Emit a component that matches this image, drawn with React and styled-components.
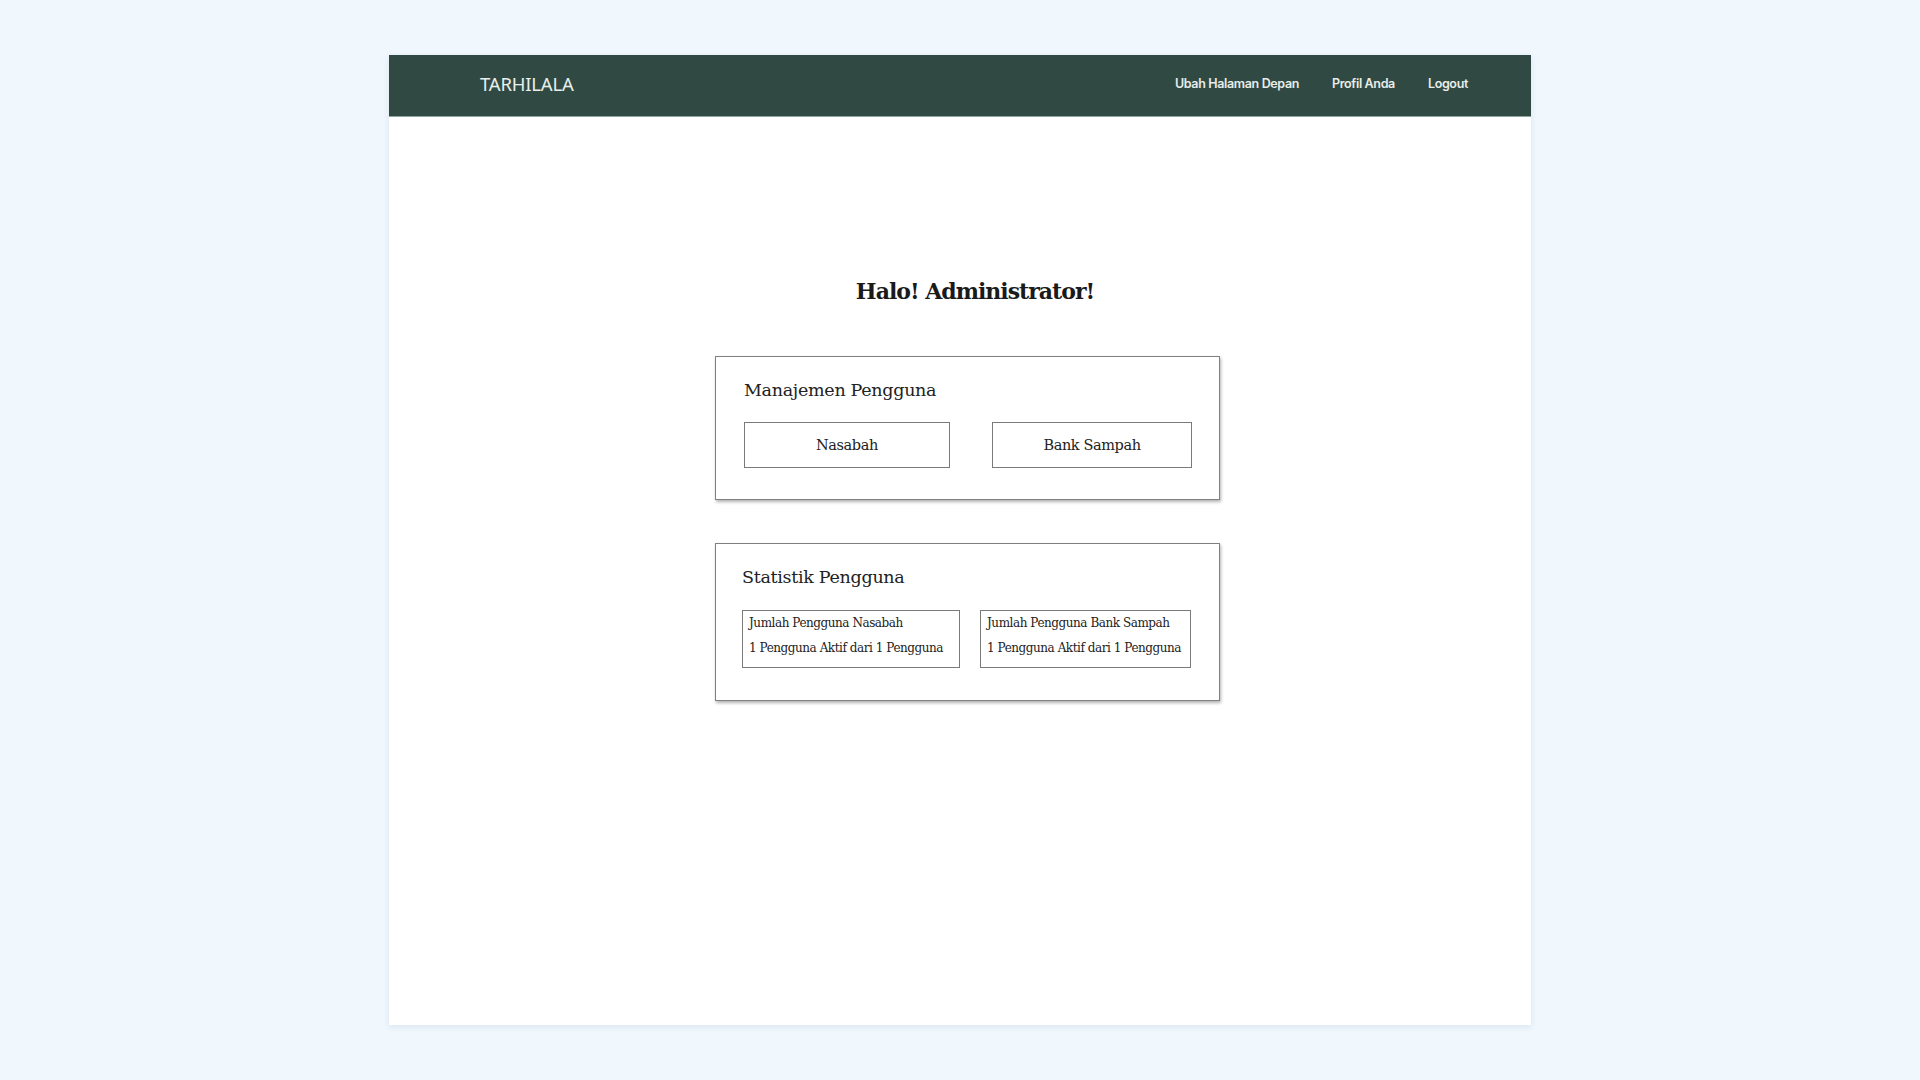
import React from 'react';
import styled, { createGlobalStyle } from 'styled-components';

const Global = createGlobalStyle`
  html, body { margin: 0; padding: 0; }
  body {
    background: #f0f7fd;
    font-family: 'DejaVu Serif', serif;
  }
`;

const Page = styled.div`
  min-height: 1080px;
  display: flex;
  justify-content: center;
  padding-top: 55px;
  box-sizing: border-box;
`;

const Frame = styled.div`
  width: 1142px;
  height: 970px;
  background: #ffffff;
  box-shadow: 0 2px 6px rgba(180, 200, 215, 0.35);
  display: flex;
  flex-direction: column;
`;

const NavBar = styled.header`
  height: 62px;
  background: #304a43;
  border-bottom: 1px solid #8fa59e;
  box-sizing: border-box;
  display: flex;
  align-items: center;
  justify-content: space-between;
  padding: 0 63px 4px 91px;
`;

const Brand = styled.div`
  font-family: 'Noto Sans', sans-serif;
  font-size: 18.5px;
  letter-spacing: -0.2px;
  color: #e9efec;
`;

const Links = styled.nav`
  display: flex;
  gap: 33px;
`;

const NavLink = styled.a`
  font-family: Inter, sans-serif;
  font-size: 12.5px;
  font-weight: 600;
  letter-spacing: -0.35px;
  color: #e8ecea;
  text-decoration: none;
  cursor: pointer;
`;

// content column sits a little right of the frame centre
const Main = styled.main`
  display: flex;
  flex-direction: column;
  align-items: center;
  padding: 161px 0 0 15px;
`;

const Greeting = styled.h1`
  margin: 0 0 52px 15px;
  font-family: 'DejaVu Serif', serif;
  font-size: 22px;
  line-height: 26px;
  font-weight: 700;
  letter-spacing: -1px;
  color: #1a1a1a;
`;

const Card = styled.section`
  width: 505px;
  box-sizing: border-box;
  border: 1px solid #808080;
  box-shadow: 1px 2px 3px rgba(0, 0, 0, 0.3);
  padding: ${p => p.$pad};
  margin-bottom: 43px;
`;

const CardTitle = styled.h2`
  margin: 0;
  font-family: 'DejaVu Serif', serif;
  font-size: 17.5px;
  font-weight: 400;
  letter-spacing: -0.3px;
  color: #222;
  line-height: 24px;
`;

const Row = styled.div`
  display: flex;
  justify-content: space-between;
  margin-top: ${p => p.$top}px;
`;

const ActionBox = styled.button`
  width: ${p => p.$w}px;
  height: 46px;
  padding: 0;
  background: #fff;
  border: 1px solid #7a7a7a;
  font-family: 'DejaVu Serif', serif;
  font-size: 14.5px;
  letter-spacing: -0.4px;
  color: #222;
  cursor: pointer;
`;

const StatBox = styled.div`
  width: ${p => p.$w}px;
  height: 58px;
  box-sizing: border-box;
  border: 1px solid #7a7a7a;
  padding: 0 6px;
  font-family: 'DejaVu Serif', serif;
  font-size: 12px;
  letter-spacing: -0.45px;
  color: #222;
  line-height: 25px;
`;

const StatLine = styled.div`
  white-space: nowrap;
`;

export default function App() {
  return (
    <>
      <Global />
      <Page>
        <Frame>
          <NavBar>
            <Brand>TARHILALA</Brand>
            <Links>
              <NavLink>Ubah Halaman Depan</NavLink>
              <NavLink>Profil Anda</NavLink>
              <NavLink>Logout</NavLink>
            </Links>
          </NavBar>
          <Main>
            <Greeting>Halo! Administrator!</Greeting>
            <Card $pad="21px 27px 31px 28px">
              <CardTitle>Manajemen Pengguna</CardTitle>
              <Row $top={20}>
                <ActionBox $w={206}>Nasabah</ActionBox>
                <ActionBox $w={200}>Bank Sampah</ActionBox>
              </Row>
            </Card>
            <Card $pad="21px 28px 32px 26px">
              <CardTitle>Statistik Pengguna</CardTitle>
              <Row $top={21}>
                <StatBox $w={218}>
                  <StatLine>Jumlah Pengguna Nasabah</StatLine>
                  <StatLine>1 Pengguna Aktif dari 1 Pengguna</StatLine>
                </StatBox>
                <StatBox $w={211}>
                  <StatLine>Jumlah Pengguna Bank Sampah</StatLine>
                  <StatLine>1 Pengguna Aktif dari 1 Pengguna</StatLine>
                </StatBox>
              </Row>
            </Card>
          </Main>
        </Frame>
      </Page>
    </>
  );
}
